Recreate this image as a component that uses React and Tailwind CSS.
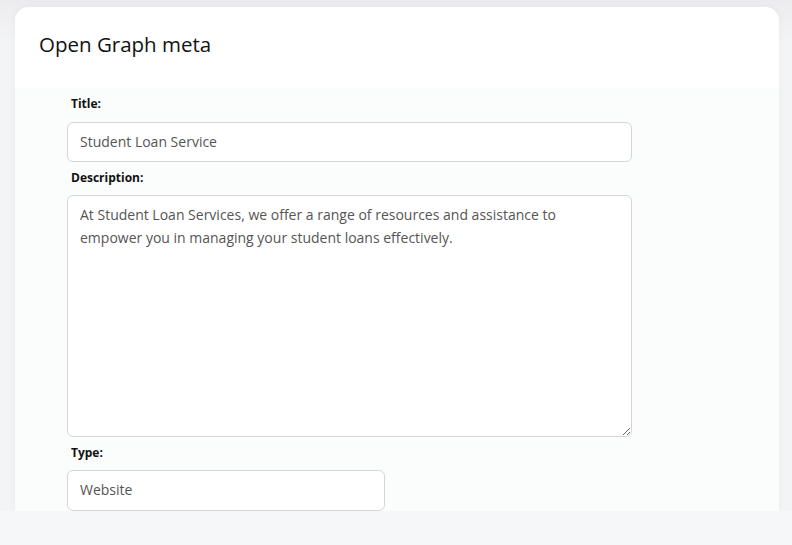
import React from 'react';

const font = { fontFamily: '"Open Sans", "Liberation Sans", sans-serif' };

const Label = ({ children }) => (
  <label className="block pl-1 text-[12px] font-bold leading-[16px] text-[#111]">{children}</label>
);

export default function App() {
  return (
    <div className="h-[545px] w-[792px] overflow-hidden bg-[#f6f7f9]" style={font}>
      <div className="h-[511px] overflow-hidden bg-gradient-to-b from-[#ececee] to-[#f3f4f6] to-[40px] pl-[15px] pr-[13px] pt-[7px]">
        <div className="h-full rounded-t-[14px] bg-[#fbfcfc] shadow-[0_0_8px_rgba(0,0,0,0.04)]">
          <div className="h-[81px] rounded-t-[14px] bg-white px-6 pt-[23px]">
            <h2 className="text-[20.5px] font-medium leading-[28px] text-[#111]">Open Graph meta</h2>
          </div>
          <div className="px-[52px] pt-[6px]">
            <div className="flex flex-col">
              <div className="pt-[2px]">
                <Label>Title:</Label>
              </div>
              <input
                readOnly
                value="Student Loan Service"
                className="mt-[10px] h-[40px] w-[565px] rounded-md border border-[#d4d5d9] bg-white px-3 pb-[2px] text-[14px] text-[#555] outline-none"
              />
              <div className="mt-[8px]">
                <Label>Description:</Label>
              </div>
              <textarea
                readOnly
                value="At Student Loan Services, we offer a range of resources and assistance to empower you in managing your student loans effectively."
                className="mt-[9px] h-[242px] w-[565px] resize-y rounded-md border border-[#d4d5d9] bg-white px-3 pt-[7px] text-[14px] leading-[23px] text-[#555] outline-none"
              />
              <div className="mt-[8px]">
                <Label>Type:</Label>
              </div>
              <input
                readOnly
                value="Website"
                className="mt-[9px] h-[41px] w-[318px] rounded-md border border-[#d4d5d9] bg-white px-3 pb-[2px] text-[14px] text-[#555] outline-none"
              />
            </div>
          </div>
        </div>
      </div>
    </div>
  );
}
